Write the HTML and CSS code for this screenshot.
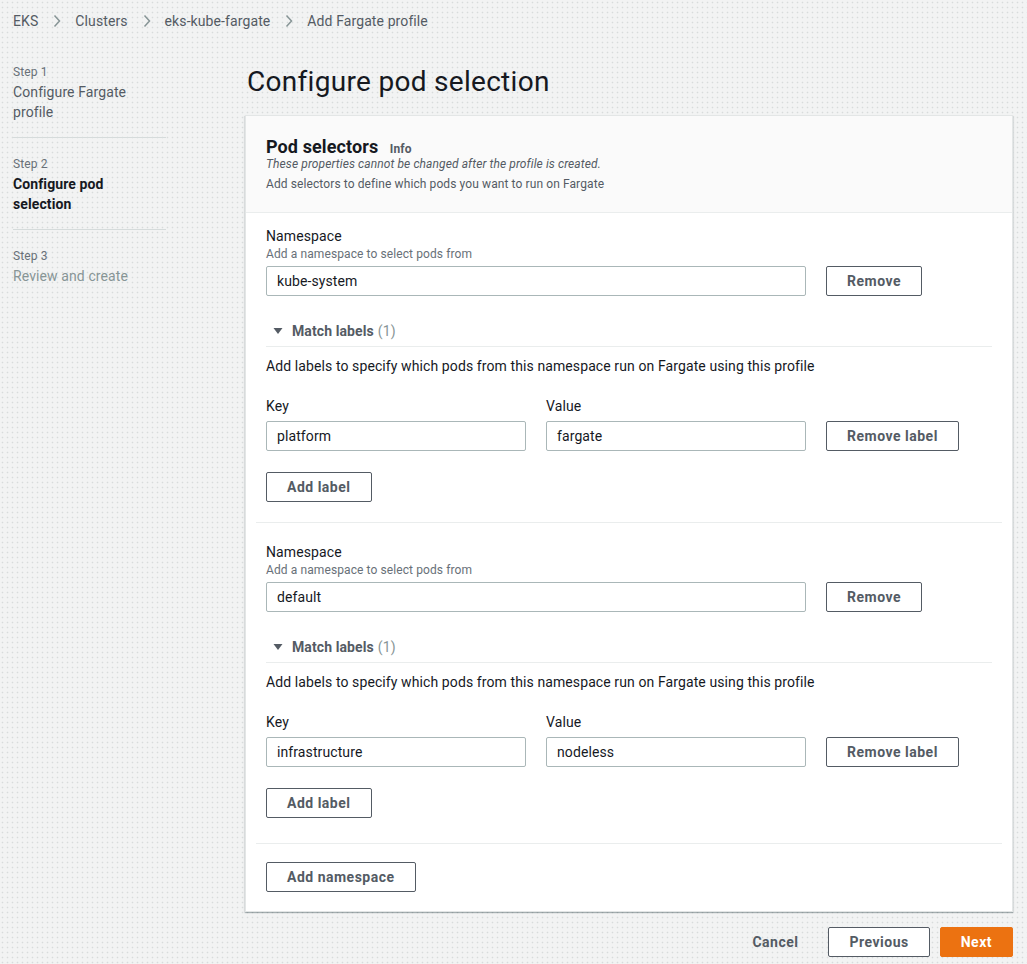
FILE: index.html
```html
<!DOCTYPE html>
<html lang="en">
<head>
<meta charset="utf-8">
<title>Configure pod selection</title>
<link rel="stylesheet" href="styles.css">
</head>
<body>
<nav class="breadcrumbs">
  <a class="crumb">EKS</a>
  <svg class="sep" width="8" height="14" viewBox="0 0 8 14"><path d="M1.5 1.5 L6.5 7 L1.5 12.5" fill="none" stroke="#879596" stroke-width="1.5"/></svg>
  <a class="crumb">Clusters</a>
  <svg class="sep" width="8" height="14" viewBox="0 0 8 14"><path d="M1.5 1.5 L6.5 7 L1.5 12.5" fill="none" stroke="#879596" stroke-width="1.5"/></svg>
  <a class="crumb">eks-kube-fargate</a>
  <svg class="sep" width="8" height="14" viewBox="0 0 8 14"><path d="M1.5 1.5 L6.5 7 L1.5 12.5" fill="none" stroke="#879596" stroke-width="1.5"/></svg>
  <span class="crumb current">Add Fargate profile</span>
</nav>

<div class="layout">
  <aside class="steps">
    <div class="step">
      <div class="step-num">Step 1</div>
      <div class="step-title done">Configure Fargate profile</div>
    </div>
    <div class="step">
      <div class="step-num">Step 2</div>
      <div class="step-title active">Configure pod selection</div>
    </div>
    <div class="step last">
      <div class="step-num">Step 3</div>
      <div class="step-title todo">Review and create</div>
    </div>
  </aside>

  <main class="main">
    <h1 class="page-title">Configure pod selection</h1>

    <section class="panel">
      <header class="panel-header">
        <h2 class="panel-title">Pod selectors <span class="info">Info</span></h2>
        <p class="panel-note">These properties cannot be changed after the profile is created.</p>
        <p class="panel-desc">Add selectors to define which pods you want to run on Fargate</p>
      </header>

      <div class="panel-body">
        <div class="selector first">
          <div class="field-label">Namespace</div>
          <div class="field-desc">Add a namespace to select pods from</div>
          <div class="ns-row">
            <div class="input">kube-system</div>
            <button class="btn">Remove</button>
          </div>
          <div class="expander">
            <div class="exp-head">
              <svg class="caret" width="16" height="16" viewBox="0 0 16 16"><path d="M3.5 5 L12.5 5 L8 11 Z" fill="#545b64"/></svg>
              <span class="exp-title">Match labels</span> <span class="count">(1)</span>
            </div>
            <p class="exp-desc">Add labels to specify which pods from this namespace run on Fargate using this profile</p>
            <div class="kv-row">
              <div class="kv-col">
                <div class="field-label">Key</div>
                <div class="input">platform</div>
              </div>
              <div class="kv-col">
                <div class="field-label">Value</div>
                <div class="input">fargate</div>
              </div>
              <button class="btn">Remove label</button>
            </div>
            <button class="btn add-label">Add label</button>
          </div>
        </div>

        <div class="selector second">
          <div class="field-label">Namespace</div>
          <div class="field-desc">Add a namespace to select pods from</div>
          <div class="ns-row">
            <div class="input">default</div>
            <button class="btn">Remove</button>
          </div>
          <div class="expander">
            <div class="exp-head">
              <svg class="caret" width="16" height="16" viewBox="0 0 16 16"><path d="M3.5 5 L12.5 5 L8 11 Z" fill="#545b64"/></svg>
              <span class="exp-title">Match labels</span> <span class="count">(1)</span>
            </div>
            <p class="exp-desc">Add labels to specify which pods from this namespace run on Fargate using this profile</p>
            <div class="kv-row">
              <div class="kv-col">
                <div class="field-label">Key</div>
                <div class="input">infrastructure</div>
              </div>
              <div class="kv-col">
                <div class="field-label">Value</div>
                <div class="input">nodeless</div>
              </div>
              <button class="btn">Remove label</button>
            </div>
            <button class="btn add-label">Add label</button>
          </div>
        </div>

        <div class="add-ns">
          <button class="btn">Add namespace</button>
        </div>
      </div>
    </section>

    <div class="actions">
      <button class="btn link">Cancel</button>
      <button class="btn">Previous</button>
      <button class="btn primary">Next</button>
    </div>
  </main>
</div>
</body>
</html>
```

FILE: styles.css
```css
* { box-sizing: border-box; }

html, body {
  margin: 0;
  padding: 0;
}

body {
  font-family: Roboto, "Liberation Sans", Arial, sans-serif;
  font-size: 14px;
  line-height: 20px;
  letter-spacing: 0.1px;
  color: #16191f;
  background-color: #f2f3f3;
  background-image: radial-gradient(circle, #d8dbdb 0.7px, rgba(242,243,243,0) 1.1px);
  background-size: 5px 5px;
  min-height: 964px;
}

/* Breadcrumbs */
.breadcrumbs {
  display: flex;
  align-items: center;
  height: 42px;
  padding: 11px 13px;
}
.crumb {
  color: #545b64;
  text-decoration: none;
  white-space: nowrap;
}
.sep {
  margin: 0 14px 0 15px;
  flex: none;
}

/* Layout */
.layout {
  display: grid;
  grid-template-columns: 245px 768px;
}

/* Steps */
.steps {
  padding: 22px 0 0 13px;
}
.step {
  width: 153px;
  padding: 0 0 15px;
  border-bottom: 1px solid #d5dbdb;
  margin-bottom: 18px;
}
.step.last {
  border-bottom: none;
}
.step-num {
  font-size: 12px;
  line-height: 16px;
  color: #687078;
  margin-bottom: 2px;
}
.step-title {
  font-size: 14px;
  line-height: 20px;
  max-width: 130px;
}
.step-title.done { color: #545b64; }
.step-title.active { color: #16191f; font-weight: 700; }
.step-title.todo { color: #879596; }

/* Main */
.main {
  display: flex;
  flex-direction: column;
}
.page-title {
  margin: 22px 0 15px;
  padding-left: 2px;
  font-size: 28px;
  line-height: 36px;
  font-weight: 400;
  letter-spacing: 0.3px;
  color: #16191f;
}

.panel {
  background: #fff;
  border: 1px solid #e3e6e6;
  box-shadow: 0 1px 1px 0 rgba(0, 28, 36, 0.2), 1px 1px 1px 0 rgba(0, 28, 36, 0.08), -1px 1px 1px 0 rgba(0, 28, 36, 0.08);
}

.panel-header {
  background: #fafafa;
  padding: 21px 20px 20px;
  border-bottom: 1px solid #eaeded;
}
.panel-title {
  margin: 0;
  font-size: 18px;
  line-height: 20px;
  font-weight: 700;
  color: #16191f;
}
.info {
  font-size: 12px;
  line-height: 12px;
  font-weight: 700;
  color: #545b64;
  margin-left: 7px;
}
.panel-note {
  margin: 1px 0 0;
  font-size: 12px;
  line-height: 12px;
  font-style: italic;
  color: #545b64;
}
.panel-desc {
  margin: 6px 0 0;
  font-size: 12px;
  line-height: 16px;
  color: #545b64;
}

.panel-body {
  padding: 0 10px;
}

.selector {
  padding: 13px 10px 20px;
  border-bottom: 1px solid #eaeded;
}
.selector.second {
  padding-top: 19px;
  padding-bottom: 25px;
}

.field-label {
  font-size: 14px;
  line-height: 20px;
  color: #16191f;
}
.field-desc {
  font-size: 12px;
  line-height: 16px;
  color: #687078;
}

.input {
  height: 30px;
  border: 1px solid #aab7b8;
  border-radius: 2px;
  background: #fff;
  padding: 4px 10px;
  font-size: 14px;
  line-height: 20px;
  color: #16191f;
}

.ns-row {
  display: grid;
  grid-template-columns: 540px auto;
  justify-content: start;
  column-gap: 20px;
  margin-top: 4px;
}

.btn {
  font-family: inherit;
  height: 30px;
  padding: 0 20px;
  border: 1px solid #545b64;
  border-radius: 2px;
  background: #fff;
  color: #545b64;
  font-size: 14px;
  font-weight: 700;
  line-height: 20px;
  letter-spacing: 0.5px;
  white-space: nowrap;
}
.btn.link {
  border-color: transparent;
  background: transparent;
  padding: 0 19px 0 23px;
}
.btn.primary {
  background: #ec7211;
  border-color: #ec7211;
  color: #fff;
}

.expander {
  margin-top: 25px;
}
.exp-head {
  display: flex;
  align-items: center;
  box-sizing: content-box;
  height: 20px;
  padding-bottom: 5px;
  border-bottom: 1px solid #eaeded;
}
.caret {
  margin: 0 6px 0 4px;
  flex: none;
}
.exp-title {
  font-weight: 700;
  color: #545b64;
}
.count {
  color: #879596;
  margin-left: 4px;
}
.exp-desc {
  margin: 9px 0 0;
  font-size: 14px;
  line-height: 20px;
  color: #16191f;
}

.kv-row {
  display: grid;
  grid-template-columns: 260px 260px auto;
  justify-content: start;
  align-items: end;
  column-gap: 20px;
  margin-top: 20px;
}
.kv-col .input {
  margin-top: 5px;
}

.add-label {
  display: block;
  margin-top: 21px;
}

.add-ns {
  padding: 18px 10px 19px;
}

.actions {
  display: flex;
  justify-content: flex-end;
  gap: 10px;
  margin-top: 15px;
}
```
